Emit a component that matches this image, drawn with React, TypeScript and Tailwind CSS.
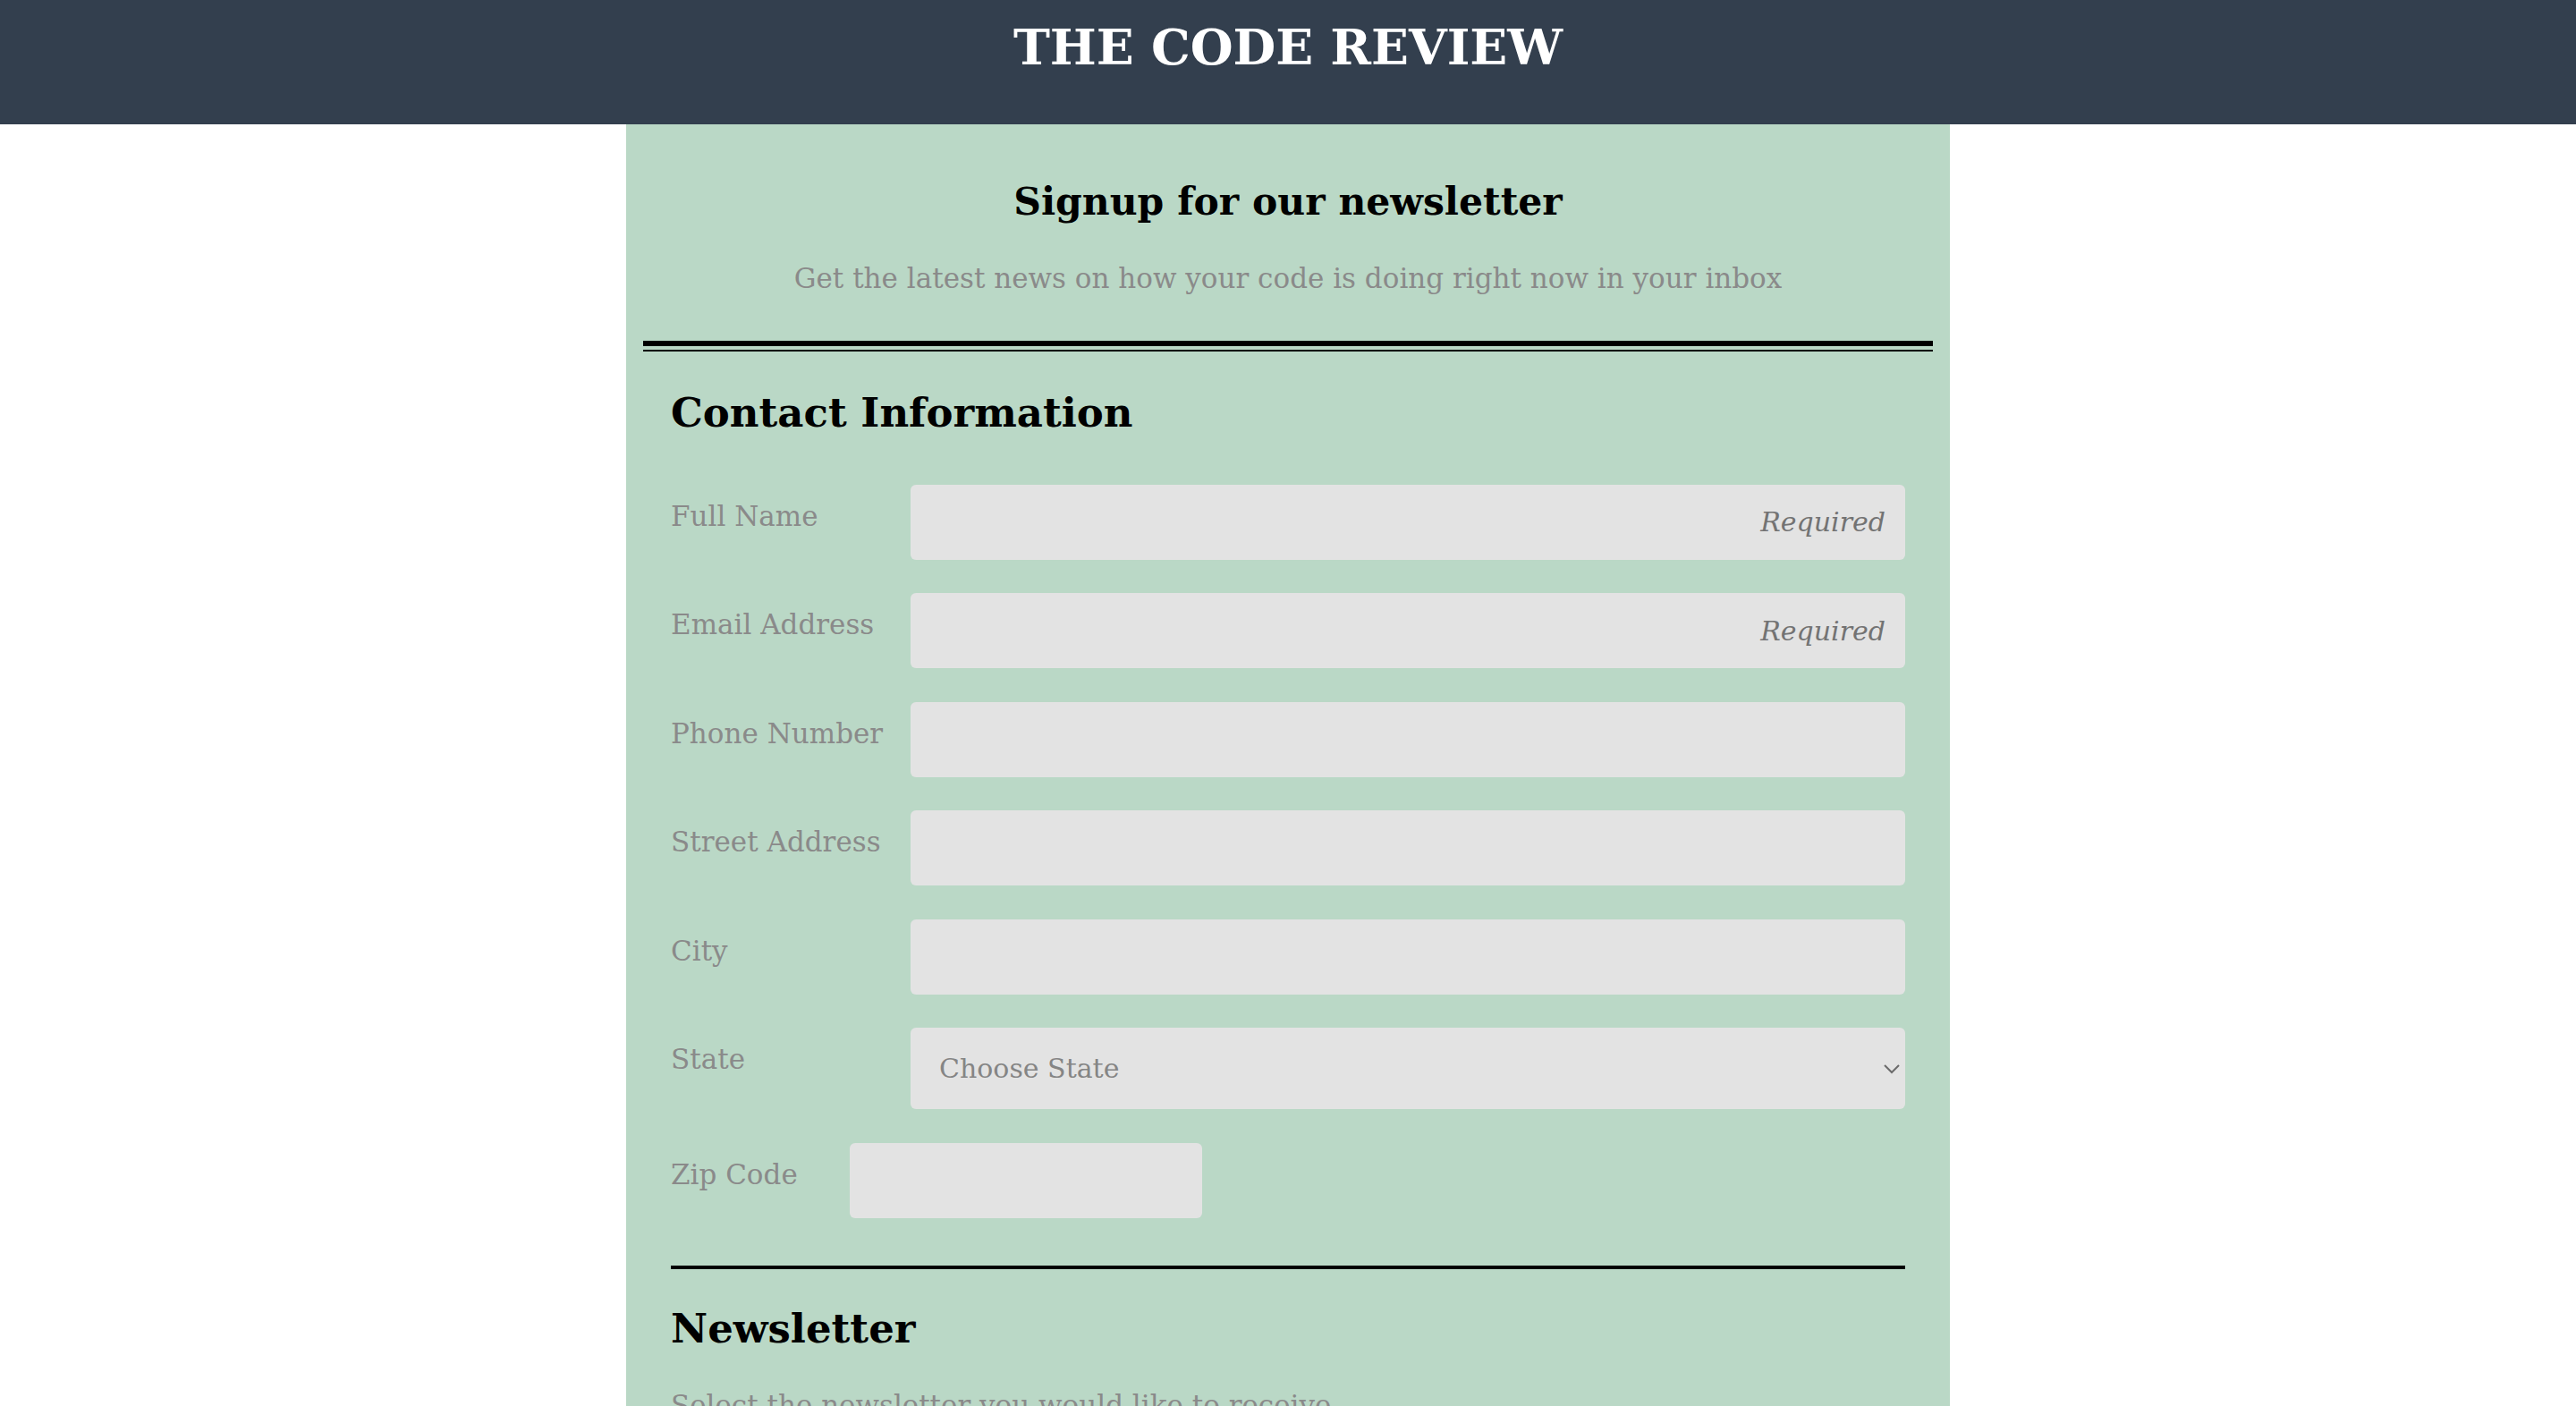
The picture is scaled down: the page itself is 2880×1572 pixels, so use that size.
import { useState } from 'react';

interface Field {
  id: string;
  label: string;
  required?: boolean;
}

const fields: Field[] = [
  { id: 'name', label: 'Full Name', required: true },
  { id: 'email', label: 'Email Address', required: true },
  { id: 'phone', label: 'Phone Number' },
  { id: 'street', label: 'Street Address' },
  { id: 'city', label: 'City' },
];

export default function App() {
  const [state, setState] = useState('');

  return (
    <div className="min-h-screen bg-white font-['DejaVu_Serif',serif]">
      <header className="h-[139px] bg-[#333f4e] flex justify-center">
        <h1 className="pt-[25px] text-[55px] leading-none font-bold text-white">THE CODE REVIEW</h1>
      </header>

      <main className="mx-auto w-[1480px] bg-[#bad8c6] px-[19px] pb-[120px]">
        <div className="pt-[65px] text-center">
          <h2 className="text-[42.5px] leading-none font-bold text-black">Signup for our newsletter</h2>
          <p className="mt-[49px] text-[31px] leading-none text-[#8a8a8a]">
            Get the latest news on how your code is doing right now in your inbox
          </p>
        </div>

        <div className="mt-[54px] border-t-[6px] border-black" />
        <div className="mt-[4px] border-t-2 border-black" />

        <section className="px-[31px]">
          <h3 className="mt-[46px] text-[45px] leading-none font-bold text-black">Contact Information</h3>

          <div className="mt-[58px] flex flex-col gap-[37.6px]">
            {fields.map((field) => (
              <div key={field.id} className="flex">
                <label htmlFor={field.id} className="w-[268px] pt-[20px] text-[31px] leading-none text-[#8a8a8a]">
                  {field.label}
                </label>
                <input
                  id={field.id}
                  type="text"
                  placeholder={field.required ? 'Required' : ''}
                  className="h-[84px] flex-1 rounded-[6px] bg-[#e3e3e3] pr-[22px] text-right text-[30px] italic text-[#555] outline-none placeholder:text-[#737373]"
                />
              </div>
            ))}

            <div className="flex">
              <label htmlFor="state" className="w-[268px] pt-[20px] text-[31px] leading-none text-[#8a8a8a]">
                State
              </label>
              <div className="relative flex-1">
                <select
                  id="state"
                  value={state}
                  onChange={(e) => setState(e.target.value)}
                  className="h-[90.5px] w-full appearance-none rounded-[6px] bg-[#e3e3e3] pl-[32px] text-[30px] text-[#858585] outline-none"
                >
                  <option value="">Choose State</option>
                  <option value="CA">California</option>
                  <option value="NY">New York</option>
                  <option value="TX">Texas</option>
                </select>
                <svg
                  className="pointer-events-none absolute right-[6px] top-[41px] h-[11px] w-[18px]"
                  viewBox="0 0 18 11"
                  fill="none"
                  stroke="#6b6b6b"
                  strokeWidth="2"
                >
                  <path d="M1 1l8 8 8-8" />
                </svg>
              </div>
            </div>

            <div className="flex">
              <label htmlFor="zip" className="w-[200px] pt-[20px] text-[31px] leading-none text-[#8a8a8a]">
                Zip Code
              </label>
              <input
                id="zip"
                type="text"
                className="h-[84px] w-[394px] rounded-[6px] bg-[#e3e3e3] px-[20px] text-[30px] outline-none"
              />
            </div>
          </div>

          <div className="mt-[53px] border-t-4 border-black" />

          <h3 className="mt-[44px] text-[45px] leading-none font-bold text-black">Newsletter</h3>
          <p className="mt-[48px] text-[31px] leading-none text-[#8a8a8a]">
            Select the newsletter you would like to receive
          </p>
        </section>
      </main>
    </div>
  );
}
